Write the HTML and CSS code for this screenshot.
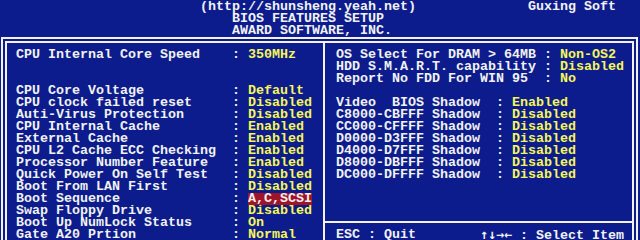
FILE: index.html
```html
<!DOCTYPE html>
<html lang="en">
<head>
<meta charset="utf-8">
<title>BIOS Features Setup</title>
<link rel="stylesheet" href="styles.css">
</head>
<body>
<div class="screen">
  <header class="head">
    <div class="line line-top"><span class="url">(http://shunsheng.yeah.net)</span><span class="brand">Guxing Soft</span></div>
    <div class="line title">BIOS FEATURES SETUP</div>
    <div class="line title">AWARD SOFTWARE, INC.</div>
  </header>
  <main class="box">
    <section class="pane left">
      <div class="row"><span class="lbl">CPU Internal Core Speed</span><span class="colon">:</span><span class="val">350MHz</span></div>
      <div class="blank"></div>
      <div class="blank"></div>
      <div class="row"><span class="lbl">CPU Core Voltage</span><span class="colon">:</span><span class="val">Default</span></div>
      <div class="row"><span class="lbl">CPU clock failed reset</span><span class="colon">:</span><span class="val">Disabled</span></div>
      <div class="row"><span class="lbl">Auti-Virus Protection</span><span class="colon">:</span><span class="val">Disabled</span></div>
      <div class="row"><span class="lbl">CPU Internal Cache</span><span class="colon">:</span><span class="val">Enabled</span></div>
      <div class="row"><span class="lbl">External Cache</span><span class="colon">:</span><span class="val">Enabled</span></div>
      <div class="row"><span class="lbl">CPU L2 Cache ECC Checking</span><span class="colon">:</span><span class="val">Enabled</span></div>
      <div class="row"><span class="lbl">Processor Number Feature</span><span class="colon">:</span><span class="val">Enabled</span></div>
      <div class="row"><span class="lbl">Quick Power On Self Test</span><span class="colon">:</span><span class="val">Disabled</span></div>
      <div class="row"><span class="lbl">Boot From LAN First</span><span class="colon">:</span><span class="val">Disabled</span></div>
      <div class="row"><span class="lbl">Boot Sequence</span><span class="colon">:</span><span class="val hl">A,C,SCSI</span></div>
      <div class="row"><span class="lbl">Swap Floppy Drive</span><span class="colon">:</span><span class="val">Disabled</span></div>
      <div class="row"><span class="lbl">Boot Up NumLock Status</span><span class="colon">:</span><span class="val">On</span></div>
      <div class="row"><span class="lbl">Gate A20 Prtion</span><span class="colon">:</span><span class="val">Normal</span></div>
    </section>
    <section class="pane right">
      <div class="group">
        <div class="row wide"><span class="lbl">OS Select For DRAM &gt; 64MB</span><span class="colon">:</span><span class="val">Non-OS2</span></div>
        <div class="row wide"><span class="lbl">HDD S.M.A.R.T. capability</span><span class="colon">:</span><span class="val">Disabled</span></div>
        <div class="row wide"><span class="lbl">Report No FDD For WIN 95</span><span class="colon">:</span><span class="val">No</span></div>
        <div class="blank"></div>
        <div class="row narrow"><span class="lbl">Video  BIOS Shadow</span><span class="colon">:</span><span class="val">Enabled</span></div>
        <div class="row narrow"><span class="lbl">C8000-CBFFF Shadow</span><span class="colon">:</span><span class="val">Disabled</span></div>
        <div class="row narrow"><span class="lbl">CC000-CFFFF Shadow</span><span class="colon">:</span><span class="val">Disabled</span></div>
        <div class="row narrow"><span class="lbl">D0000-D3FFF Shadow</span><span class="colon">:</span><span class="val">Disabled</span></div>
        <div class="row narrow"><span class="lbl">D4000-D7FFF Shadow</span><span class="colon">:</span><span class="val">Disabled</span></div>
        <div class="row narrow"><span class="lbl">D8000-DBFFF Shadow</span><span class="colon">:</span><span class="val">Disabled</span></div>
        <div class="row narrow"><span class="lbl">DC000-DFFFF Shadow</span><span class="colon">:</span><span class="val">Disabled</span></div>
      </div>
      <div class="hr"></div>
      <div class="keys"><span class="key">ESC : Quit</span><span class="key"><span class="arrows">↑↓→←</span> : Select Item</span></div>
    </section>
  </main>
</div>
</body>
</html>
```
FILE: styles.css
```css
* {
  box-sizing: border-box;
  margin: 0;
  padding: 0;
}

html,
body {
  background: #0c1c8c;
}

body {
  width: 640px;
  height: 240px;
  overflow: hidden;
  color: #f2f2f2;
  font-family: "Liberation Mono", "DejaVu Sans Mono", monospace;
  font-weight: bold;
  font-size: 13.333px;
  line-height: 12px;
}

.screen {
  width: 640px;
  height: 240px;
}

.head {
  height: 37px;
  padding-top: 1px;
}

.line {
  height: 12px;
  white-space: pre;
}

.line-top {
  display: flex;
  justify-content: space-between;
  padding-left: 200px;
  padding-right: 24px;
}

.title {
  padding-left: 232px;
}

.box {
  margin-left: 1px;
  width: 637px;
  height: 203px;
  border: 6px double #f2f2f2;
  border-bottom: 0;
  display: grid;
  grid-template-columns: 316px 1fr;
}

.pane {
  padding-top: 6px;
}

.left {
  padding-left: 9px;
}

.right {
  border-left: 2px solid #f2f2f2;
  display: flex;
  flex-direction: column;
}

.row {
  height: 12px;
  display: grid;
  grid-template-columns: 216px 16px auto;
  white-space: pre;
}

.right .row {
  padding-left: 11px;
}

.row.wide {
  grid-template-columns: 208px 16px auto;
}

.row.narrow {
  grid-template-columns: 160px 16px auto;
}

.blank {
  height: 12px;
}

.group {
  height: 132px;
}

.val {
  color: #f6f65a;
  justify-self: start;
}

.val.hl {
  background: #a0142a;
  color: #f6eef0;
}

.hr {
  height: 12px;
  margin-top: 36px;
  padding-top: 4px;
}

.hr::before {
  content: "";
  display: block;
  height: 2px;
  background: #f2f2f2;
}

.keys {
  height: 12px;
  display: flex;
  padding-left: 11px;
  white-space: pre;
}

.key:first-child {
  width: 144px;
}

.arrows {
  font-family: "DejaVu Sans Mono", monospace;
}
```
